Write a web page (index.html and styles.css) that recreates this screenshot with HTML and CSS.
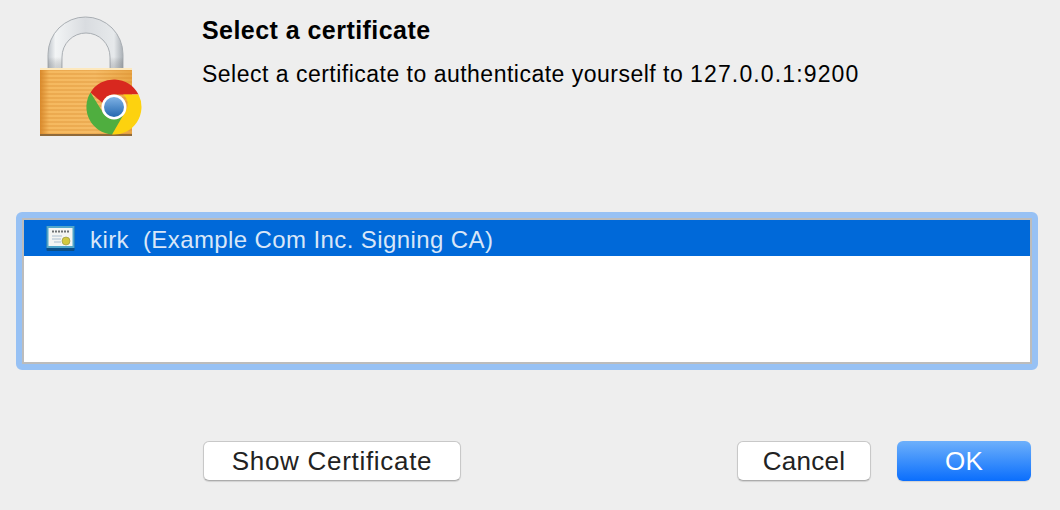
FILE: index.html
```html
<!DOCTYPE html>
<html lang="en">
<head>
  <meta charset="UTF-8" />
  <title>Select a certificate</title>
  <link rel="stylesheet" href="styles.css">
</head>
<body>

  <div class="dialog">
    <div class="top">
      <svg class="lock" width="104" height="124" viewBox="0 0 104 124">
        <defs>
          <linearGradient id="shackle" x1="0" y1="0" x2="1" y2="0">
            <stop offset="0" stop-color="#bfc5cb"/>
            <stop offset="0.1" stop-color="#f2f4f5"/>
            <stop offset="0.5" stop-color="#d9dce0"/>
            <stop offset="0.88" stop-color="#e6e9eb"/>
            <stop offset="1" stop-color="#aab0b6"/>
          </linearGradient>
          <linearGradient id="leg" x1="0" y1="0" x2="0" y2="1">
            <stop offset="0" stop-color="#000" stop-opacity="0"/>
            <stop offset="1" stop-color="#60666c" stop-opacity="0.25"/>
          </linearGradient>
          <linearGradient id="body" x1="0" y1="0" x2="1" y2="0">
            <stop offset="0" stop-color="#d98a2c"/>
            <stop offset="0.1" stop-color="#f5b95f"/>
            <stop offset="0.6" stop-color="#f5bb65"/>
            <stop offset="1" stop-color="#e8a545"/>
          </linearGradient>
          <pattern id="lines" width="4" height="4" patternUnits="userSpaceOnUse">
            <rect width="4" height="2" y="2" fill="#d98a2b" opacity="0.3"/>
          </pattern>
          <linearGradient id="blue" x1="0" y1="0" x2="0" y2="1">
            <stop offset="0" stop-color="#7fb2e5"/>
            <stop offset="1" stop-color="#2468b0"/>
          </linearGradient>
        </defs>
        <path d="M8 54V39.5A37.5 37.5 0 0 1 83 39.5V54H70V42A24 24 0 0 0 22 42V54Z" fill="url(#shackle)" stroke="#a9aeb3" stroke-width="1"/>
        <rect x="8" y="42" width="14" height="11" fill="url(#leg)"/>
        <rect x="70" y="42" width="13" height="11" fill="url(#leg)"/>
        <rect x="0" y="53" width="92" height="67" rx="1" fill="url(#body)"/>
        <rect x="0" y="53" width="92" height="67" rx="1" fill="url(#lines)"/>
        <rect x="0" y="53" width="92" height="2" fill="#fde8bd"/>
        <rect x="0" y="119" width="92" height="2" fill="#8f6a3a"/>
        <g transform="translate(74 92)">
          <path d="M-23.5 -14.5A27.5 27.5 0 0 1 24.5 -12.5L0 -12.5A12.5 12.5 0 0 0 -11.5 -4Z" fill="#d8281f"/>
          <path d="M24.5 -12.5A27.5 27.5 0 0 1 -2 27.4L11 5A12.5 12.5 0 0 0 9 -12.5Z" fill="#fdd20f"/>
          <path d="M-2 27.4A27.5 27.5 0 0 1 -23.5 -14.5L-10.5 6.5A12.5 12.5 0 0 0 11 5Z" fill="#4fae3f"/>
          <circle r="12.5" fill="#fff"/>
          <circle r="10" fill="url(#blue)"/>
        </g>
      </svg>
      <div class="message">
        <h1>Select a certificate</h1>
        <p>Select a certificate to authenticate yourself to <span class="host">127.0.0.1:9200</span></p>
      </div>
    </div>

    <div class="list-ring">
      <div class="list">
        <div class="row selected">
          <svg class="cert" width="30" height="26" viewBox="0 0 30 26">
            <rect x="0.5" y="1" width="28" height="25" rx="1" fill="#0b4f88"/>
            <rect x="0.5" y="1" width="28" height="22" fill="#4fa6cb"/>
            <rect x="2.5" y="3" width="24" height="18" fill="#f3f5f3"/>
            <path d="M6 6.5H23" stroke="#6f7374" stroke-width="1.8" stroke-dasharray="2 1"/>
            <path d="M6 11H16M6 14H15M8 17H15" stroke="#a9bed0" stroke-width="1"/>
            <circle cx="20" cy="16" r="4" fill="#d2c93f" stroke="#8f9140" stroke-width="0.6"/>
          </svg>
          <span class="name">kirk</span>
          <span class="issuer">(Example Com Inc. Signing CA)</span>
        </div>
      </div>
    </div>

    <div class="buttons">
      <button class="btn show">Show Certificate</button>
      <button class="btn cancel">Cancel</button>
      <button class="btn ok">OK</button>
    </div>
  </div>

</body>
</html>
```

FILE: styles.css
```css
html, body {
  margin: 0;
  padding: 0;
}

body {
  width: 1060px;
  height: 510px;
  overflow: hidden;
  background-color: #eeeeee;
  font-family: "Liberation Sans", Arial, sans-serif;
  color: #000;
}

.dialog {
  display: flex;
  flex-direction: column;
  height: 510px;
}

.top {
  display: flex;
  height: 212px;
  padding-left: 40px;
  box-sizing: border-box;
}

.lock {
  margin-top: 15px;
  flex: none;
}

.message {
  margin-left: 58px;
  padding-top: 15px;
}

h1 {
  margin: 0;
  font-size: 25px;
  line-height: 30px;
  font-weight: bold;
  letter-spacing: 0.45px;
}

.message p {
  margin: 14px 0 0;
  font-size: 23px;
  line-height: 30px;
  letter-spacing: 0.49px;
}

.host {
  letter-spacing: 1.13px;
}

.list-ring {
  margin: 0 22px 0 16px;
  height: 158px;
  box-sizing: border-box;
  border: 6px solid #97c1f4;
  border-radius: 6px;
}

.list {
  height: 100%;
  box-sizing: border-box;
  background-color: #fff;
  border: 2px solid #bcbcbc;
}

.row {
  display: flex;
  align-items: center;
  height: 36px;
  padding-left: 22px;
  font-size: 24px;
}

.row.selected {
  background-color: #0069d9;
  color: #d8e6f8;
}

.cert {
  flex: none;
  margin-right: 14px;
}

.name,
.issuer {
  padding-top: 3px;
}

.name {
  letter-spacing: 0.4px;
}

.issuer {
  margin-left: 14px;
  letter-spacing: 0.4px;
}

.buttons {
  display: flex;
  margin-top: 71px;
  padding-left: 203px;
}

.btn {
  height: 40px;
  box-sizing: border-box;
  padding: 0;
  border: 1px solid #c8c8c8;
  border-bottom-color: #acacac;
  border-radius: 6px;
  background-color: #fff;
  color: #222;
  font-family: "Liberation Sans", Arial, sans-serif;
  font-size: 26px;
  letter-spacing: 0.3px;
  box-shadow: 0 1px 1px rgba(0,0,0,0.12);
}

.show {
  width: 258px;
  letter-spacing: 0.7px;
}

.cancel {
  width: 134px;
  margin-left: 276px;
}

.ok {
  width: 134px;
  margin-left: 26px;
  border: none;
  color: #fff;
  background: linear-gradient(#6db0fb, #0a6efd);
}
```
